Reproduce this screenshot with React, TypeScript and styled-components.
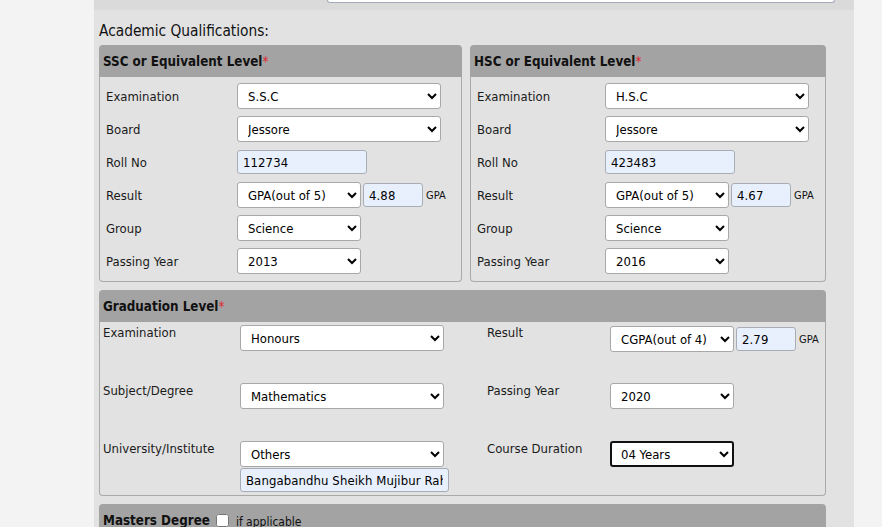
import React from "react";
import styled, { createGlobalStyle } from "styled-components";

const FONT = `"DejaVu Sans Condensed", "DejaVu Sans", Verdana, sans-serif`;

const GlobalStyle = createGlobalStyle`
  html, body {
    margin: 0;
    padding: 0;
    background: #f3f3f3;
  }
  body {
    font-family: ${FONT};
    font-stretch: semi-condensed;
    color: #1a1a1a;
  }
`;

const Main = styled.div`
  margin-left: 94px;
  width: 760px;
  min-height: 540px;
  background: #e2e2e2;
`;

const TopStrip = styled.div`
  height: 10px;
  background: #dadada;
  padding-left: 233px;
  overflow: hidden;
`;

const PrevField = styled.div`
  width: 506px;
  height: 2px;
  background: #ffffff;
  border: 1px solid #a3abba;
  border-top: none;
  border-radius: 0 0 4px 4px;
`;

const Content = styled.div`
  width: 727px;
  padding: 0 5px;
`;

const SectionTitle = styled.div`
  font-size: 15.3px;
  line-height: 20px;
  padding-top: 11px;
  margin-bottom: 4px;
  color: #111;
`;

const PanelRow = styled.div`
  display: flex;
  gap: 8px;
  margin-bottom: 8px;
`;

const Panel = styled.div<{ $width?: number }>`
  display: flex;
  flex-direction: column;
  width: ${(p) => (p.$width ? `${p.$width}px` : "100%")};
  margin-bottom: ${(p) => (p.$width ? "0" : "8px")};
`;

const PanelHeader = styled.div`
  height: 32px;
  display: flex;
  align-items: center;
  padding-left: 4px;
  padding-top: 1px;
  box-sizing: border-box;
  background: #a3a3a3;
  border-radius: 4px 4px 0 0;
  font-size: 13.3px;
  font-weight: bold;
  color: #111;
`;

const Star = styled.span`
  color: #e0262c;
  font-weight: normal;
  align-self: flex-start;
  margin-top: 8px;
`;

const HeaderNote = styled.span`
  font-weight: normal;
  font-size: 12px;
  margin-left: 7px;
  margin-top: 3px;
`;

const Check = styled.input`
  width: 13px;
  height: 13px;
  margin: 0 0 0 6px;
`;

const PanelBody = styled.div`
  border: 1px solid #a9a9a9;
  border-top: none;
  border-radius: 0 0 4px 4px;
`;

const LevelGrid = styled.div<{ $labelWidth: number }>`
  display: grid;
  grid-template-columns: ${(p) => p.$labelWidth}px 1fr;
  grid-auto-rows: 26px;
  row-gap: 7px;
  align-items: center;
  padding: 6px 6px 7px;
`;

const Label = styled.div`
  font-size: 13px;
  line-height: 15px;
  color: #1a1a1a;
`;

const Select = styled.select<{ $width: number; $focused?: boolean }>`
  width: ${(p) => p.$width}px;
  height: 26px;
  box-sizing: border-box;
  font-family: ${FONT};
  font-stretch: semi-condensed;
  font-size: 13px;
  color: #000;
  background: #fff;
  border: ${(p) => (p.$focused ? "2px solid #111" : "1px solid #a8a8a8")};
  border-radius: 3px;
  padding: 0 2px 0 ${(p) => (p.$focused ? "5px" : "6px")};
  margin: 0;
`;

const TextInput = styled.input<{ $width: number }>`
  width: ${(p) => p.$width}px;
  height: 24px;
  box-sizing: border-box;
  font-family: ${FONT};
  font-stretch: semi-condensed;
  font-size: 13px;
  letter-spacing: 0.1px;
  color: #000;
  background: #e8f0fe;
  border: 1px solid #a8adb5;
  border-radius: 3px;
  padding: 0 5px;
  margin: 0;
`;

const Inline = styled.div`
  display: flex;
  align-items: center;
  gap: 2px;
`;

const Unit = styled.span`
  font-size: 11px;
  color: #111;
  margin-left: 1px;
`;

const GradGrid = styled.div`
  display: grid;
  grid-template-columns: 137px 247px 123px 1fr;
  grid-template-rows: 58px 58px auto;
  align-items: start;
  padding: 3px 3px 3px;
`;

const GradLabel = styled(Label)`
  padding-top: 0;
`;

const Stack = styled.div`
  display: flex;
  flex-direction: column;
  gap: 1px;
`;

const ResultCell = styled(Inline)`
  margin-top: 1px;
`;

type LevelProps = {
  title: string;
  width: number;
  labelWidth: number;
  exam: string;
  roll: string;
  gpa: string;
  year: string;
};

const Level: React.FC<LevelProps> = ({ title, width, labelWidth, exam, roll, gpa, year }) => (
  <Panel $width={width}>
    <PanelHeader>
      {title}
      <Star>*</Star>
    </PanelHeader>
    <PanelBody>
      <LevelGrid $labelWidth={labelWidth}>
        <Label>Examination</Label>
        <Select $width={204} defaultValue={exam}>
          <option>{exam}</option>
        </Select>
        <Label>Board</Label>
        <Select $width={204} defaultValue="Jessore">
          <option>Jessore</option>
        </Select>
        <Label>Roll No</Label>
        <TextInput $width={130} defaultValue={roll} />
        <Label>Result</Label>
        <Inline>
          <Select $width={124} defaultValue="GPA(out of 5)">
            <option>GPA(out of 5)</option>
          </Select>
          <TextInput $width={60} defaultValue={gpa} />
          <Unit>GPA</Unit>
        </Inline>
        <Label>Group</Label>
        <Select $width={124} defaultValue="Science">
          <option>Science</option>
        </Select>
        <Label>Passing Year</Label>
        <Select $width={124} defaultValue={year}>
          <option>{year}</option>
        </Select>
      </LevelGrid>
    </PanelBody>
  </Panel>
);

export default function App() {
  return (
    <>
      <GlobalStyle />
      <Main>
        <TopStrip>
          <PrevField />
        </TopStrip>
        <Content>
          <SectionTitle>Academic Qualifications:</SectionTitle>
          <PanelRow>
            <Level
              title="SSC or Equivalent Level"
              width={363}
              labelWidth={131}
              exam="S.S.C"
              roll="112734"
              gpa="4.88"
              year="2013"
            />
            <Level
              title="HSC or Equivalent Level"
              width={356}
              labelWidth={128}
              exam="H.S.C"
              roll="423483"
              gpa="4.67"
              year="2016"
            />
          </PanelRow>

          <Panel>
            <PanelHeader>
              Graduation Level
              <Star>*</Star>
            </PanelHeader>
            <PanelBody>
              <GradGrid>
                <GradLabel>Examination</GradLabel>
                <Select $width={204} defaultValue="Honours">
                  <option>Honours</option>
                </Select>
                <GradLabel>Result</GradLabel>
                <ResultCell>
                  <Select $width={124} defaultValue="CGPA(out of 4)">
                    <option>CGPA(out of 4)</option>
                  </Select>
                  <TextInput $width={60} defaultValue="2.79" />
                  <Unit>GPA</Unit>
                </ResultCell>

                <GradLabel>Subject/Degree</GradLabel>
                <Select $width={204} defaultValue="Mathematics">
                  <option>Mathematics</option>
                </Select>
                <GradLabel>Passing Year</GradLabel>
                <Select $width={124} defaultValue="2020">
                  <option>2020</option>
                </Select>

                <GradLabel>University/Institute</GradLabel>
                <Stack>
                  <Select $width={204} defaultValue="Others">
                    <option>Others</option>
                  </Select>
                  <TextInput
                    $width={209}
                    defaultValue="Bangabandhu Sheikh Mujibur Rahman Science and Technology University"
                  />
                </Stack>
                <GradLabel>Course Duration</GradLabel>
                <Select $width={124} $focused defaultValue="04 Years">
                  <option>04 Years</option>
                </Select>
              </GradGrid>
            </PanelBody>
          </Panel>

          <Panel>
            <PanelHeader>
              Masters Degree
              <Check type="checkbox" />
              <HeaderNote>if applicable</HeaderNote>
            </PanelHeader>
          </Panel>
        </Content>
      </Main>
    </>
  );
}
